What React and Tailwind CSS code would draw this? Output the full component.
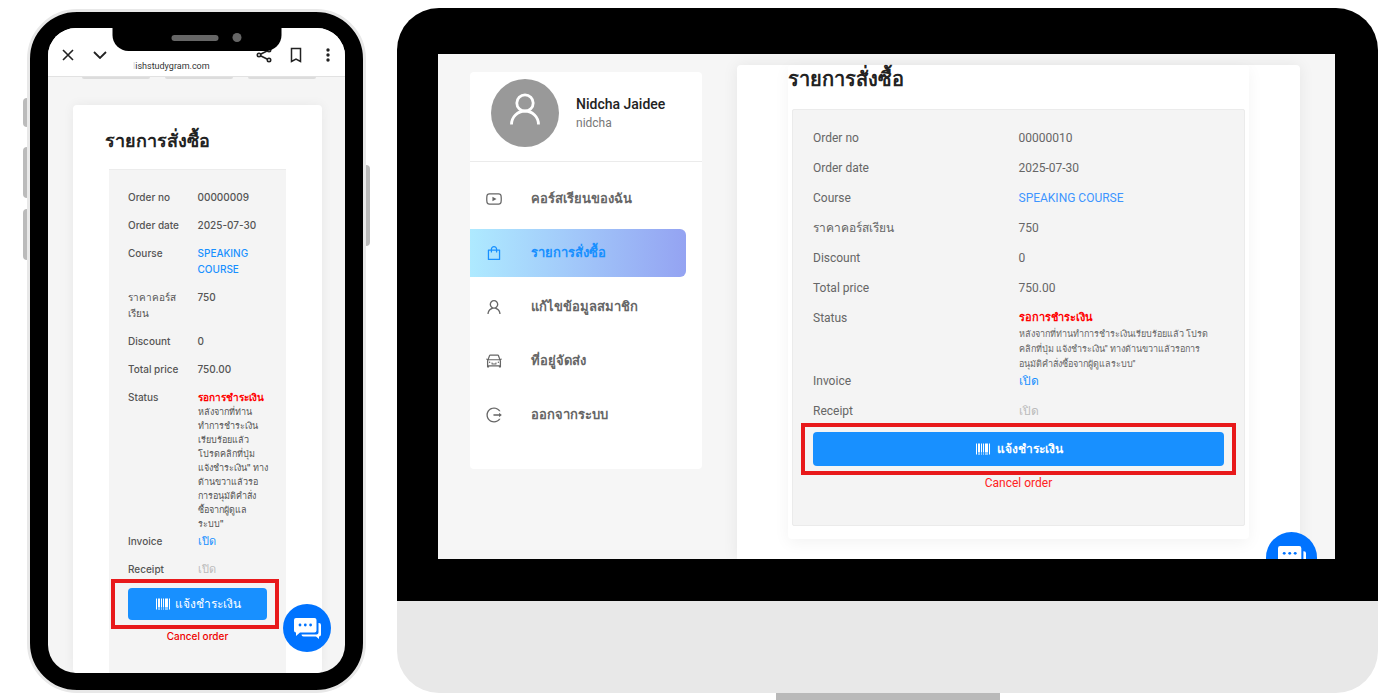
import React from "react";
import {
  AiOutlineYoutube,
  AiOutlineShopping,
  AiOutlineUser,
  AiOutlineCar,
  AiOutlineLogout,
  AiOutlineBarcode,
} from "react-icons/ai";

const menuItems = [
  { label: "คอร์สเรียนของฉัน", icon: AiOutlineYoutube },
  { label: "รายการสั่งซื้อ", icon: AiOutlineShopping, active: true },
  { label: "แก้ไขข้อมูลสมาชิก", icon: AiOutlineUser },
  { label: "ที่อยู่จัดส่ง", icon: AiOutlineCar },
  { label: "ออกจากระบบ", icon: AiOutlineLogout },
];

const mobileNote = [
  "หลังจากที่ท่าน",
  "ทำการชำระเงิน",
  "เรียบร้อยแล้ว",
  "โปรดคลิกที่ปุ่ม",
  "แจ้งชำระเงิน\" ทาง",
  "ด้านขวาแล้วรอ",
  "การอนุมัติคำสั่ง",
  "ซื้อจากผู้ดูแล",
  "ระบบ\"",
];

const desktopNote = [
  "หลังจากที่ท่านทำการชำระเงินเรียบร้อยแล้ว โปรด",
  "คลิกที่ปุ่ม แจ้งชำระเงิน\" ทางด้านขวาแล้วรอการ",
  "อนุมัติคำสั่งซื้อจากผู้ดูแลระบบ\"",
];

const ChatIcon = ({ className }) => (
  <svg viewBox="0 0 27 21" className={className} aria-hidden="true">
    <path
      fill="#fff"
      d="M2 0h18.500a2 2 0 0 1 2 2v10.500a2 2 0 0 1-2 2H6L2 18v-3.500a2 2 0 0 1-2-2V2a2 2 0 0 1 2-2z"
    />
    <path
      fill="#fff"
      d="M24.500 5h.5a2 2 0 0 1 2 2v9.500a2 2 0 0 1-2 2V21l-3-2.500H9.500a2 2 0 0 1-2-2h15a2 2 0 0 0 2-2z"
    />
    <circle cx="6" cy="7" r="1.400" fill="#0073ff" />
    <circle cx="11.300" cy="7" r="1.400" fill="#0073ff" />
    <circle cx="16.600" cy="7" r="1.400" fill="#0073ff" />
  </svg>
);

const AvatarIcon = () => (
  <svg viewBox="0 0 30 33" className="mb-2 h-[33px] w-[30px]" fill="none" stroke="currentColor" strokeWidth="2.800">
    <circle cx="15" cy="10" r="8.200" />
    <path d="M1.500 31.500a13.500 13.500 0 0 1 27 0" />
  </svg>
);

const Row = ({ label, lines, children, className }) => (
  <div className={`grid grid-cols-2 ${className}`}>
    <dt>
      {lines
        ? lines.map((line) => (
            <span key={line} className="block whitespace-nowrap">
              {line}
            </span>
          ))
        : label}
    </dt>
    <dd>{children}</dd>
  </div>
);

const PhoneHeader = () => (
  <div className="flex h-[49px] items-center border-b border-[#e2e2e2] bg-white pt-[6px] pr-[9px] pl-3 text-[#222]">
    <button aria-label="Close" className="flex w-4 justify-center">
      <svg viewBox="0 0 12 12" className="size-3" fill="none" stroke="currentColor" strokeWidth="1.600">
        <path d="M1 1l10 10M11 1L1 11" />
      </svg>
    </button>
    <button aria-label="Minimize" className="ml-4 flex w-4 justify-center">
      <svg viewBox="0 0 14 8" className="h-2 w-[14px]" fill="none" stroke="currentColor" strokeWidth="1.800">
        <path d="M1 1l6 6 6-6" />
      </svg>
    </button>
    <p className="ml-[25px] flex-1 pt-[22px] font-['Roboto',sans-serif] text-[9px] leading-4 text-[#333]">
      <span className="text-gray-300">l</span>ishstudygram.com
    </p>
    <button aria-label="Share" className="flex w-4 justify-center">
      <svg viewBox="0 0 16 16" className="size-4" fill="none" stroke="currentColor" strokeWidth="1.600">
        <circle cx="3" cy="8" r="1.700" />
        <circle cx="13" cy="13" r="1.700" />
        <circle cx="13" cy="3" r="1.700" />
        <path d="M4.500 8.800l7 3.500M4.500 7.200l7-3.500" />
      </svg>
    </button>
    <button aria-label="Bookmark" className="ml-4 flex w-4 justify-center">
      <svg viewBox="0 0 12 16" className="h-4 w-3" fill="none" stroke="currentColor" strokeWidth="1.500">
        <path d="M1.500 1.500h9v13L6 12l-4.500 2.500z" />
      </svg>
    </button>
    <button aria-label="More" className="ml-4 flex w-4 justify-center">
      <svg viewBox="0 0 4 14" className="h-[14px] w-1" fill="currentColor">
        <circle cx="2" cy="2" r="1.700" />
        <circle cx="2" cy="7" r="1.700" />
        <circle cx="2" cy="12" r="1.700" />
      </svg>
    </button>
  </div>
);

const PhoneScreen = () => (
  <div className="relative flex aspect-[297/645] flex-col overflow-hidden rounded-[28px] bg-[#f5f5f5] font-['Inter','Noto_Sans',sans-serif]">
    <PhoneHeader />
    <div className="flex gap-[15px] pr-[29px] pl-[34px]">
      <div className="h-[2px] flex-1 rounded-b bg-[#dcdcdc]" />
      <div className="h-[2px] flex-1 rounded-b bg-[#dcdcdc]" />
      <div className="h-[2px] flex-1 rounded-b bg-[#dcdcdc]" />
    </div>
    <main className="mt-[26px] mr-[23px] ml-[25px] flex-1 rounded bg-white px-9 pt-5 shadow-[0_0_12px_rgba(0,0,0,0.06)]">
      <h1 className="-ml-1 text-lg leading-8 font-semibold text-[#222]">รายการสั่งซื้อ</h1>
      <section className="mt-3 h-full border-t border-[#ececec] bg-[#f4f4f4] px-[19px] pt-[19px]">
        <dl className="text-[10px] leading-4 font-medium text-[#555]">
          <Row label="Order no" className="pb-3">00000009</Row>
          <Row label="Order date" className="pb-3">2025-07-30</Row>
          <Row label="Course" className="pb-3">
            <a href="#course" className="text-[#1890ff]">SPEAKING COURSE</a>
          </Row>
          <Row lines={["ราคาคอร์ส", "เรียน"]} className="pb-3">750</Row>
          <Row label="Discount" className="pb-3">0</Row>
          <Row label="Total price" className="pb-3">750.00</Row>
          <Row label="Status" className="pb-[2px]">
            <span className="block font-semibold whitespace-nowrap text-[#f00]">รอการชำระเงิน</span>
            {mobileNote.map((line) => (
              <span key={line} className="block text-[9px] leading-[14px] whitespace-nowrap">
                {line}
              </span>
            ))}
          </Row>
          <Row label="Invoice" className="pb-3">
            <a href="#invoice" className="text-[11px] text-[#1890ff]">เปิด</a>
          </Row>
          <Row label="Receipt" className="pb-[11px]">
            <span className="text-[11px] text-[#bbb]">เปิด</span>
          </Row>
        </dl>
        <div className="relative">
          <button className="flex h-8 w-full items-center justify-center gap-1 rounded bg-[#1890ff] text-xs font-medium text-white">
            <AiOutlineBarcode className="size-4" />
            แจ้งชำระเงิน
          </button>
          <div className="pointer-events-none absolute -inset-y-[9px] -right-3 -left-[17px] border-4 border-[#e8191b]" />
        </div>
        <div className="flex justify-center pt-2">
          <button className="text-[10px] leading-4 font-medium text-[#e00]">Cancel order</button>
        </div>
      </section>
    </main>
    <button
      aria-label="Chat"
      className="absolute right-[14px] bottom-[21px] flex size-12 items-center justify-center rounded-full bg-[#0073ff]"
    >
      <ChatIcon className="h-[21px] w-[27px]" />
    </button>
  </div>
);

const Phone = () => (
  <div className="flex shrink-0 items-start pt-[9px]">
    <div className="w-1 pt-[89px]">
      <div className="h-[29px] rounded-l bg-[#bbb]" />
      <div className="mt-5 h-[51px] rounded-l bg-[#bbb]" />
      <div className="mt-[11px] h-[51px] rounded-l bg-[#bbb]" />
    </div>
    <div className="relative w-[339px] rounded-[50px] border-3 border-[#e8e8e8] bg-black px-[18px] pt-4 pb-[17px]">
      <PhoneScreen />
      {/* Notch */}
      <div className="absolute top-3 left-1/2 flex h-[27px] w-[169px] -translate-x-1/2 items-center justify-center gap-[14px] rounded-b-2xl bg-black">
        <span className="ml-5 h-[6px] w-[47px] rounded-full bg-[#666]" />
        <span className="size-[9px] rounded-full bg-[#666]" />
      </div>
    </div>
    <div className="w-1 pt-[156px]">
      <div className="h-[81px] rounded-r bg-[#bbb]" />
    </div>
  </div>
);

const Sidebar = () => (
  <aside className="mt-[18px] w-[232px] shrink-0 self-start rounded bg-white">
    <div className="flex h-[90px] items-start gap-[17px] border-b border-[#ebebeb] pt-[7px] pl-[21px]">
      <div className="flex size-[68px] items-center justify-center rounded-full bg-[#999] text-white">
        <AvatarIcon />
      </div>
      <div className="pt-4">
        <p className="text-sm leading-[18px] font-medium text-[#222]">Nidcha Jaidee</p>
        <p className="text-xs leading-5 text-[#777]">nidcha</p>
      </div>
    </div>
    <nav className="flex flex-col gap-[6px] pt-[13px] pr-4 pb-[30px]">
      {menuItems.map(({ label, icon: Icon, active }) => (
        <a
          key={label}
          href="#menu"
          className={`flex h-12 items-center gap-7 rounded-r-md pl-[15px] text-[13px] font-semibold ${
            active ? "bg-linear-to-r from-[#aeeaff] to-[#94a3f2] text-[#1890ff]" : "text-[#666]"
          }`}
        >
          <Icon className="size-[18px] shrink-0" />
          {label}
        </a>
      ))}
    </nav>
  </aside>
);

const DesktopOrder = () => (
  <main className="mt-[11px] min-w-0 flex-1 self-stretch rounded-t bg-white pr-[51px] pl-[51px] shadow-[0_0_16px_rgba(0,0,0,0.07)]">
    <div className="rounded px-1 pb-[13px] shadow-[0_4px_16px_rgba(0,0,0,0.05)]">
      <h1 className="-ml-1 text-xl leading-7 font-semibold text-[#222]">รายการสั่งซื้อ</h1>
      <section className="mt-4 rounded-xs border border-[#ebebeb] bg-[#f4f4f4] px-5 pt-[19px] pb-[33px]">
        <dl className="text-xs leading-[18px] text-[#666]">
          <Row label="Order no" className="pb-3">00000010</Row>
          <Row label="Order date" className="pb-3">2025-07-30</Row>
          <Row label="Course" className="pb-3">
            <a href="#course" className="text-[#3d94ff]">SPEAKING COURSE</a>
          </Row>
          <Row lines={["ราคาคอร์สเรียน"]} className="pb-3">750</Row>
          <Row label="Discount" className="pb-3">0</Row>
          <Row label="Total price" className="pb-3">750.00</Row>
          <Row label="Status">
            <span className="block text-[11px] font-semibold text-[#f00]">รอการชำระเงิน</span>
            {desktopNote.map((line) => (
              <span key={line} className="block text-[9px] leading-[15px] font-medium whitespace-nowrap">
                {line}
              </span>
            ))}
          </Row>
          <Row label="Invoice" className="pb-3">
            <a href="#invoice" className="text-[#1890ff]">เปิด</a>
          </Row>
          <Row label="Receipt" className="pb-3">
            <span className="text-[#bbb]">เปิด</span>
          </Row>
        </dl>
        <div className="relative">
          <button className="flex h-[34px] w-full items-center justify-center gap-[6px] rounded bg-[#1890ff] text-xs font-semibold text-white">
            <AiOutlineBarcode className="size-4" />
            แจ้งชำระเงิน
          </button>
          <div className="pointer-events-none absolute -inset-x-3 -inset-y-[9px] border-4 border-[#e8191b]" />
        </div>
        <div className="flex justify-center pt-2">
          <button className="text-xs leading-[18px] text-[#f22]">Cancel order</button>
        </div>
      </section>
    </div>
  </main>
);

const Monitor = () => (
  <div className="min-w-0 flex-1 pt-2">
    <div className="rounded-t-[42px] bg-black pt-[46px] pr-[43px] pb-[42px] pl-[41px]">
      <div className="relative flex aspect-video gap-[35px] overflow-hidden bg-[#f6f6f6] pr-[35px] pl-8 font-['Roboto','Noto_Sans',sans-serif]">
        <Sidebar />
        <DesktopOrder />
        <button
          aria-label="Chat"
          className="absolute right-[18px] -bottom-6 flex size-[51px] items-center justify-center rounded-full bg-[#0073ff]"
        >
          <ChatIcon className="h-[22px] w-[28px]" />
        </button>
      </div>
    </div>
    <div className="h-[92px] rounded-b-[42px] bg-[#e8e8e8]" />
    <div className="mx-auto h-2 w-[224px] bg-[#b9b9b9]" />
  </div>
);

const App = () => {
  return (
    <div className="flex min-h-screen items-start gap-[27px] overflow-hidden bg-white pr-[22px] pl-[23px]">
      <Phone />
      <Monitor />
    </div>
  );
};

export default App;
